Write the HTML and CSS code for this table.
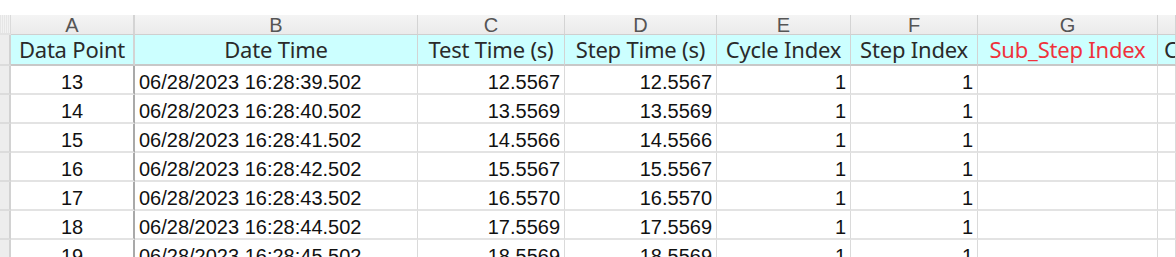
FILE: index.html
```html
<!DOCTYPE html>
<html>
<head>
<meta charset="utf-8">
<link rel="stylesheet" href="styles.css">
</head>
<body>
<div class="sheet">
  <div class="grid">
    <div class="corner"></div>
    <div class="colhead">A</div>
    <div class="colhead">B</div>
    <div class="colhead">C</div>
    <div class="colhead">D</div>
    <div class="colhead">E</div>
    <div class="colhead">F</div>
    <div class="colhead">G</div>
    <div class="colhead last"></div>

    <div class="rowhead"></div>
    <div class="hd">Data Point</div>
    <div class="hd">Date Time</div>
    <div class="hd">Test Time (s)</div>
    <div class="hd">Step Time (s)</div>
    <div class="hd">Cycle Index</div>
    <div class="hd">Step Index</div>
    <div class="hd red">Sub_Step Index</div>
    <div class="hd cut">C</div>

    <div class="rowhead"></div><div class="c ctr">13</div><div class="c lft">06/28/2023 16:28:39.502</div><div class="c">12.5567</div><div class="c">12.5567</div><div class="c">1</div><div class="c">1</div><div class="c"></div><div class="c"></div>
    <div class="rowhead"></div><div class="c ctr">14</div><div class="c lft">06/28/2023 16:28:40.502</div><div class="c">13.5569</div><div class="c">13.5569</div><div class="c">1</div><div class="c">1</div><div class="c"></div><div class="c"></div>
    <div class="rowhead"></div><div class="c ctr">15</div><div class="c lft">06/28/2023 16:28:41.502</div><div class="c">14.5566</div><div class="c">14.5566</div><div class="c">1</div><div class="c">1</div><div class="c"></div><div class="c"></div>
    <div class="rowhead"></div><div class="c ctr">16</div><div class="c lft">06/28/2023 16:28:42.502</div><div class="c">15.5567</div><div class="c">15.5567</div><div class="c">1</div><div class="c">1</div><div class="c"></div><div class="c"></div>
    <div class="rowhead"></div><div class="c ctr">17</div><div class="c lft">06/28/2023 16:28:43.502</div><div class="c">16.5570</div><div class="c">16.5570</div><div class="c">1</div><div class="c">1</div><div class="c"></div><div class="c"></div>
    <div class="rowhead"></div><div class="c ctr">18</div><div class="c lft">06/28/2023 16:28:44.502</div><div class="c">17.5569</div><div class="c">17.5569</div><div class="c">1</div><div class="c">1</div><div class="c"></div><div class="c"></div>
    <div class="rowhead"></div><div class="c ctr">19</div><div class="c lft">06/28/2023 16:28:45.502</div><div class="c">18.5569</div><div class="c">18.5569</div><div class="c">1</div><div class="c">1</div><div class="c"></div><div class="c"></div>
  </div>
</div>
</body>
</html>
```

FILE: styles.css
```css
html, body {
  margin: 0;
  padding: 0;
  background: #ffffff;
  overflow: hidden;
}
.sheet {
  width: 1176px;
  height: 257px;
  overflow: hidden;
  padding-top: 15px;
  box-sizing: border-box;
  font-family: "Liberation Sans", Arial, sans-serif;
  color: #1a1a1a;
}
.grid {
  display: grid;
  grid-template-columns: 11px 124px 283px 147px 152px 134px 127px 180px 18px;
  grid-template-rows: 20px 31px repeat(7, 29px);
}
.grid > div {
  box-sizing: border-box;
  border-right: 1px solid #dadada;
  border-bottom: 2px solid #e3e3e3;
  white-space: nowrap;
  overflow: hidden;
  font-size: 20px;
  line-height: 24px;
}
.corner {
  background: repeating-linear-gradient(90deg, #e6e6e6 0 1px, #f2f2f2 1px 2px);
}
.colhead {
  background: linear-gradient(#f4f4f4, #ebebeb);
  text-align: center;
  color: #555;
  line-height: 20px !important;
  border-bottom: 1px solid #cfcfcf !important;
  border-right-color: #d4d4d4 !important;
}
.rowhead {
  background: #ededed;
  border-right: 2px solid #d2d2d2 !important;
  border-bottom-color: #dcdcdc !important;
}
.hd {
  background: #ccffff;
  text-align: center;
  font-family: "Noto Sans", "Liberation Sans", sans-serif;
  font-size: 22px !important;
  line-height: 29px !important;
  letter-spacing: -0.2px;
  color: #2a2a2a;
  border-bottom: 2px solid #c8c8c8 !important;
  border-right-color: #d3d3d3 !important;
}
.hd.red {
  color: #f0323c;
}
.hd.cut {
  text-align: left;
  padding-left: 6px;
}
.grid > div:nth-child(9n+2) {
  border-right: 2px solid #a9a9a9;
}
.c {
  text-align: right;
  padding-top: 4px;
  padding-right: 4px;
  color: #111;
}
.c.ctr {
  text-align: center;
  padding-right: 0;
}
.c.lft {
  text-align: left;
  padding-left: 4px;
}
```
